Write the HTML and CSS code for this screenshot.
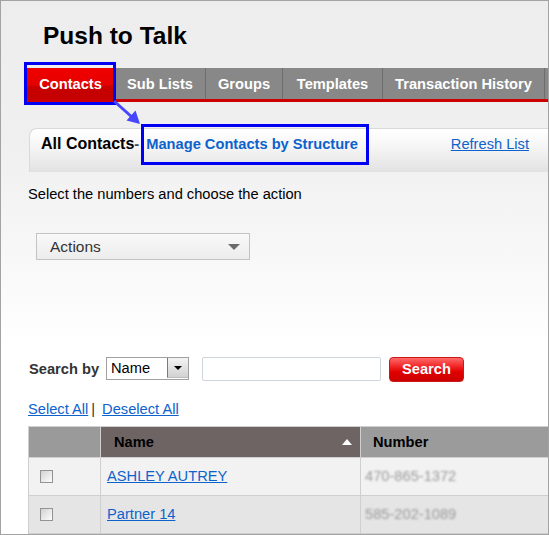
FILE: index.html
```html
<!DOCTYPE html>
<html>
<head>
<meta charset="utf-8">
<title>Push to Talk</title>
<link rel="stylesheet" href="styles.css">
</head>
<body>
<div class="frame">
  <h1 class="title">Push to Talk</h1>
  <nav class="tabs">
    <a class="tab active t-contacts">Contacts</a>
    <a class="tab t-sub">Sub Lists</a>
    <a class="tab t-groups">Groups</a>
    <a class="tab t-templates">Templates</a>
    <a class="tab last t-history">Transaction History</a>
  </nav>
  <div class="subpanel">
    <span class="sub-title">All Contacts</span><span class="dash">-</span><a class="manage">Manage Contacts by Structure</a>
    <a class="refresh">Refresh List</a>
  </div>
  <p class="hint">Select the numbers and choose the action</p>
  <div class="actions"><span>Actions</span><span class="caret"></span></div>
  <div class="search-row">
    <span class="search-label">Search by</span>
    <div class="select"><span class="select-value">Name</span><span class="select-btn"><span class="mini-caret"></span></span></div>
    <div class="text-input"></div>
    <button class="search-btn">Search</button>
  </div>
  <div class="select-links">
    <a class="link">Select All</a><span class="pipe">|</span><a class="link">Deselect All</a>
  </div>
  <table class="grid">
    <thead>
      <tr>
        <th class="c-check"></th>
        <th class="c-name"><div class="th-inner"><span>Name</span><span class="sort-up"></span></div></th>
        <th class="c-num">Number</th>
      </tr>
    </thead>
    <tbody>
      <tr class="odd">
        <td class="c-check"><input type="checkbox" class="check"></td>
        <td class="c-name"><a class="link">ASHLEY AUTREY</a></td>
        <td class="c-num"><span class="blur">470-865-1372</span></td>
      </tr>
      <tr class="even">
        <td class="c-check"><input type="checkbox" class="check"></td>
        <td class="c-name"><a class="link">Partner 14</a></td>
        <td class="c-num"><span class="blur">585-202-1089</span></td>
      </tr>
    </tbody>
  </table>

  <div class="mark mark-tab"></div>
  <div class="mark mark-link"></div>
  <svg class="arrow" width="549" height="535" viewBox="0 0 549 535">
    <line x1="114" y1="101" x2="133" y2="118" stroke="#4646ff" stroke-width="3"/>
    <polygon points="140,124 126.5,120.5 135.5,110.5" fill="#4646ff"/>
  </svg>
</div>
</body>
</html>
```

FILE: styles.css
```css
* { box-sizing: border-box; }
html, body { margin: 0; padding: 0; }
body {
  font-family: "Liberation Sans", Arial, sans-serif;
  font-size: 14.67px;
  color: #000;
  background: #fff;
}
.frame {
  position: relative;
  width: 549px;
  height: 535px;
  border: 1px solid #a3a3a3;
  overflow: hidden;
  background: linear-gradient(#ededed 0px, #f0f0f0 150px, #f6f6f6 230px, #fbfbfb 300px, #ffffff 345px);
}
.title {
  margin: 21px 0 0 42px;
  font-size: 24.5px;
  line-height: 28px;
  font-weight: bold;
}
.tabs {
  display: flex;
  margin: 18px 0 0 26px;
  height: 34px;
  background: #888888;
  border-bottom: 3px solid #cc0000;
}
.tab {
  display: block;
  padding-top: 1px;
  line-height: 30px;
  font-weight: bold;
  color: #fff;
  text-align: center;
  border-left: 1px solid #6e6e6e;
  white-space: nowrap;
}
.t-contacts { width: 87px; }
.t-sub { width: 91px; }
.t-groups { width: 77px; }
.t-templates { width: 100px; }
.t-history { width: 163px; }
.tab.active {
  border-left: none;
  background: linear-gradient(#f00000 0%, #e60000 55%, #c70000 60%, #c40000 100%);
}
.tab.last { border-right: 1px solid #6e6e6e; }
.subpanel {
  display: flex;
  align-items: baseline;
  margin: 26px 0 0 28px;
  height: 44px;
  padding: 5px 19px 0 11px;
  border-top: 1px solid #d9d9d9;
  border-left: 1px solid #d9d9d9;
  border-top-left-radius: 8px;
  background: linear-gradient(#ffffff 0%, #f6f6f6 40%, #e2e2e2 100%);
  line-height: 19px;
}
.sub-title {
  font-size: 16px;
  font-weight: bold;
}
.dash {
  font-weight: bold;
  color: #3a4a60;
  margin-right: 7px;
}
.manage {
  font-weight: bold;
  color: #0d62cc;
}
.refresh {
  margin-left: auto;
  color: #0d62cc;
  text-decoration: underline;
}
.hint {
  margin: 14px 0 0 27px;
  line-height: 17px;
}
.actions {
  display: flex;
  align-items: center;
  justify-content: space-between;
  margin: 30px 0 0 35px;
  width: 214px;
  height: 27px;
  padding: 0 9px 0 13px;
  border: 1px solid #c3c3c3;
  background: linear-gradient(#f9f9f9, #ececec);
  color: #333;
  font-size: 15.5px;
  line-height: 25px;
}
.caret {
  width: 0;
  height: 0;
  border-left: 6px solid transparent;
  border-right: 6px solid transparent;
  border-top: 6px solid #6a6a6a;
}
.search-row {
  display: flex;
  align-items: flex-start;
  margin: 97px 0 0 28px;
}
.search-label {
  font-weight: bold;
  color: #333;
  line-height: 25px;
  width: 77px;
}
.select {
  display: flex;
  width: 83px;
  height: 23px;
  border: 1px solid #a0a0a0;
  background: #fff;
}
.select-value {
  flex: 1;
  padding-left: 4px;
  line-height: 21px;
}
.select-btn {
  display: flex;
  align-items: center;
  justify-content: center;
  width: 21px;
  height: 20px;
  border-left: 1px solid #7a7a7a;
  border-bottom: 1px solid #bdbdbd;
  background: linear-gradient(#f4f4f4, #d2d2d2);
}
.mini-caret {
  width: 0;
  height: 0;
  border-left: 4px solid transparent;
  border-right: 4px solid transparent;
  border-top: 4px solid #000;
}
.text-input {
  margin-left: 13px;
  width: 179px;
  height: 24px;
  border: 1px solid #cfd5dc;
  border-radius: 2px;
  background: #fff;
}
.search-btn {
  margin-left: 8px;
  width: 75px;
  height: 25px;
  padding: 0;
  border: 1px solid #c81818;
  border-radius: 4px;
  background: linear-gradient(#ff6a6a 0%, #f02020 40%, #e00000 60%, #cc0000 100%);
  color: #fff;
  font-family: "Liberation Sans", Arial, sans-serif;
  font-size: 14.67px;
  font-weight: bold;
  line-height: 23px;
}
.select-links {
  margin: 19px 0 0 27px;
  line-height: 17px;
}
.link {
  color: #0d62cc;
  text-decoration: underline;
}
.pipe {
  color: #333;
  margin: 0 7px 0 3px;
}
.grid {
  margin: 8px 0 0 27px;
  border-collapse: separate;
  border-spacing: 0;
  border-top: 1px solid #cfcfcf;
  border-left: 1px solid #cfcfcf;
  table-layout: fixed;
  width: 540px;
}
.grid th, .grid td {
  padding: 0;
  border-right: 1px solid #cfcfcf;
  border-bottom: 1px solid #cfcfcf;
  text-align: left;
}
.grid th {
  height: 31px;
  line-height: 30px;
  font-weight: bold;
}
.grid th.c-check { width: 72px; background: #9a9a9a; }
.grid th.c-name { width: 260px; background: #6e6464; padding: 0 8px 0 13px; }
.grid th.c-num { background: #9b9b9b; padding-left: 12px; }
.th-inner {
  display: flex;
  align-items: center;
  justify-content: space-between;
}
.sort-up {
  width: 0;
  height: 0;
  border-left: 5.5px solid transparent;
  border-right: 5.5px solid transparent;
  border-bottom: 6px solid #fff;
}
.grid td {
  height: 38px;
  line-height: 37px;
  vertical-align: middle;
}
.grid tr.odd td { background: #f2f2f2; }
.grid tr.even td { background: #e5e5e5; }
.grid td.c-check { padding-left: 11px; }
.grid td.c-name { padding-left: 6px; }
.grid td.c-num { padding-left: 4px; }
.check {
  appearance: none;
  -webkit-appearance: none;
  display: block;
  margin: 0;
  width: 13px;
  height: 13px;
  border: 1px solid #939393;
  background: linear-gradient(135deg, #d2d2d2 0%, #e8e8e8 50%, #fdfdfd 100%);
}
.blur {
  color: #9a9a9a;
  filter: blur(1.2px);
}
.mark {
  position: absolute;
  border: 3px solid #0000f2;
}
.mark-tab {
  left: 23px;
  top: 61px;
  width: 92px;
  height: 43px;
}
.mark-link {
  left: 140px;
  top: 123px;
  width: 228px;
  height: 41px;
}
.arrow {
  position: absolute;
  left: -1px;
  top: -1px;
  pointer-events: none;
}
```
